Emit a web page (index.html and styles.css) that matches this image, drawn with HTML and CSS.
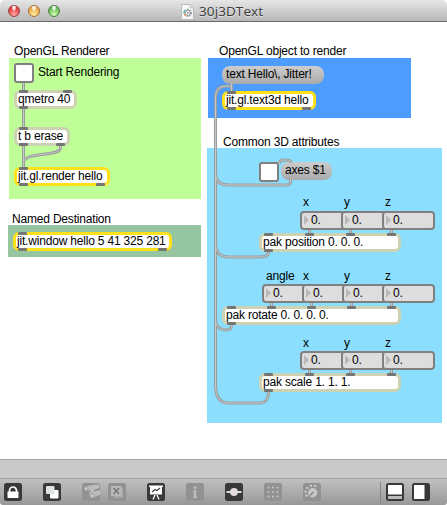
FILE: index.html
```html
<!DOCTYPE html>
<html lang="en">
<head>
<meta charset="utf-8">
<title>30j3DText</title>
<link rel="stylesheet" href="styles.css">
</head>
<body>
<div class="window">
  <header class="titlebar">
    <div class="lights"><i class="light red"></i><i class="light amber"></i><i class="light green"></i></div>
    <svg class="doc" width="13" height="16" viewBox="0 0 13 16">
      <path d="M.5.5h8.500l3.500 3.500v11.500H.5z" fill="#f6f6f6" stroke="#bbb"/>
      <path d="M9 .5v3.500h3.500" fill="#ddd" stroke="#bbb" stroke-width=".7"/>
      <circle cx="6.800" cy="8.800" r="3" fill="none" stroke="#858b8d" stroke-width="2" stroke-dasharray="1.500 .7"/>
      <path d="M3 9.500A3.700 3.700 0 0 1 4.500 6" fill="none" stroke="#5eb9c2" stroke-width="1.500"/>
      <path d="M3.300 9.500l1.300 2" stroke="#ee9560" stroke-width="1.500"/>
      <circle cx="6.800" cy="8.800" r="1" fill="#999"/>
    </svg>
    <h1 class="title">30j3DText</h1>
  </header>

  <main class="patch">
    <div class="panel p-render"></div>
    <div class="panel p-object"></div>
    <div class="panel p-attrs"></div>
    <div class="panel p-dest"></div>

    <span class="label l-render">OpenGL Renderer</span>
    <span class="label l-start">Start Rendering</span>
    <span class="label l-object">OpenGL object to render</span>
    <span class="label l-attrs">Common 3D attributes</span>
    <span class="label l-dest">Named Destination</span>
    <span class="label c1 r1">x</span><span class="label c2 r1">y</span><span class="label c3 r1">z</span>
    <span class="label c0 r2">angle</span><span class="label c1 r2">x</span><span class="label c2 r2">y</span><span class="label c3 r2">z</span>
    <span class="label c1 r3">x</span><span class="label c2 r3">y</span><span class="label c3 r3">z</span>

    <div class="toggle t-start"></div>
    <div class="toggle t-axes"></div>
    <div class="message m-text">text Hello\, Jitter!</div>
    <div class="message m-axes">axes $1</div>

    <div class="object o-qmetro">qmetro 40</div>
    <div class="object o-trigger">t b erase</div>
    <div class="object jit o-render">jit.gl.render hello</div>
    <div class="object jit o-window">jit.window hello 5 41 325 281</div>
    <div class="object jit o-text3d">jit.gl.text3d hello</div>
    <div class="object o-position">pak position 0. 0. 0.</div>
    <div class="object o-rotate">pak rotate 0. 0. 0. 0.</div>
    <div class="object o-scale">pak scale 1. 1. 1.</div>

    <div class="numbers n-position"><div class="number">0.</div><div class="number">0.</div><div class="number">0.</div></div>
    <div class="numbers n-rotate"><div class="number">0.</div><div class="number">0.</div><div class="number">0.</div><div class="number">0.</div></div>
    <div class="numbers n-scale"><div class="number">0.</div><div class="number">0.</div><div class="number">0.</div></div>

    <svg class="cords" width="447" height="437" viewBox="0 22 447 437">
      <defs>
        <g id="wires" fill="none">
          <path d="M23.500 83v7M23.500 109v19M23.500 146v22"/>
          <path d="M60.500 146v2c0 9-37 3-37 15v4"/>
          <path d="M231.500 83v8v-2c0-3-2-3-5-3c-7 0-11 4-11 12V385c0 12 4 18 13 18h30c7 0 10-3 10-11"/>
          <path d="M279 164c0-3 2-4 6-4c4 0 6 0 6 3"/>
          <path d="M290.500 179v3c0 2-2 3-5 3h-57c-8 0-13-3-13-12"/>
          <path d="M268.500 252v1c0 3-4 4-10 4h-30c-8 0-13-4-13-14"/>
          <path d="M231.500 325c0 4-2 5-5 5c-7 0-11-4-11-10"/>
          <path d="M309.500 230v4M350.500 230v4M391.500 230v4"/>
          <path d="M271.500 303v4M311.500 303v4M351.500 303v4M391.500 303v4"/>
          <path d="M309.500 370v4M350.500 370v4M391.500 370v4"/>
        </g>
        <rect id="p" width="9" height="3" rx="1"/>
      </defs>
      <use href="#wires" class="cord-edge"/>
      <use href="#wires" class="cord-core"/>
      <g class="ports">
        <use href="#p" x="19" y="90"/><use href="#p" x="63" y="90"/><use href="#p" x="19" y="106"/>
        <use href="#p" x="19" y="127"/><use href="#p" x="19" y="143"/><use href="#p" x="56" y="143"/>
        <use href="#p" x="19" y="167"/><use href="#p" x="19" y="183"/><use href="#p" x="96" y="183"/>
        <use href="#p" x="18" y="232"/><use href="#p" x="18" y="248"/><use href="#p" x="158" y="248"/>
        <use href="#p" x="227" y="91"/><use href="#p" x="227" y="107"/><use href="#p" x="302" y="107"/>
        <use href="#p" x="264" y="233"/><use href="#p" x="305" y="233"/><use href="#p" x="346" y="233"/><use href="#p" x="387" y="233"/><use href="#p" x="264" y="249"/>
        <use href="#p" x="227" y="306"/><use href="#p" x="267" y="306"/><use href="#p" x="307" y="306"/><use href="#p" x="347" y="306"/><use href="#p" x="387" y="306"/><use href="#p" x="227" y="322"/>
        <use href="#p" x="264" y="373"/><use href="#p" x="305" y="373"/><use href="#p" x="346" y="373"/><use href="#p" x="387" y="373"/><use href="#p" x="264" y="389"/>
      </g>
    </svg>
  </main>

  <div class="status"></div>
  <footer class="toolbar">
    <svg class="tool" viewBox="0 0 18 18"><rect width="18" height="18" rx="2.500" fill="#393939"/><path d="M5.500 9V7.500a3.500 3.500 0 0 1 7 0V9" fill="none" stroke="#fff" stroke-width="1.700"/><rect x="3.500" y="8.500" width="11" height="6.500" rx=".7" fill="#fff"/></svg>
    <svg class="tool wide" viewBox="0 0 18 18"><rect width="18" height="18" rx="2.500" fill="#393939"/><rect x="7" y="7" width="8.500" height="8.500" rx="1" fill="#fff"/><rect x="3" y="3" width="8.500" height="8" rx="1" fill="#dce4e4"/></svg>
    <svg class="tool wide" viewBox="0 0 18 18"><rect width="18" height="18" rx="2.500" fill="#929292"/><path d="M4 3.200L14.500 1.500a2 2 0 0 1 1.500 4L12.500 6.500 11 9l5-1.500a2 2 0 0 1 1.500 4.500L11 15l-4-4 2-4L4.500 8z" fill="#bdbdbd"/><ellipse cx="4" cy="5.600" rx="2" ry="2.300" fill="#c6c6c6" stroke="#929292" stroke-width=".8"/><ellipse cx="10" cy="12.700" rx="2.200" ry="2.500" fill="#c6c6c6" stroke="#929292" stroke-width=".8"/></svg>
    <svg class="tool near" viewBox="0 0 18 18"><rect width="18" height="18" rx="2.500" fill="#929292"/><rect x="5.500" y="5" width="9.500" height="10" rx="1" fill="#aaa"/><rect x="3" y="3" width="10.500" height="10" rx="1" fill="#b9b9b9"/><path d="M5.500 5l5.500 6M11 5l-5.500 6" stroke="#777" stroke-width="1.600"/></svg>
    <svg class="tool wide" viewBox="0 0 18 18"><rect width="18" height="18" rx="2.500" fill="#393939"/><path d="M2 2.500h14v1.500h-1v7.500H3V4H2z" fill="#fff"/><path d="M5 9l3-2.500 2 1L13 5" fill="none" stroke="#444" stroke-width="1.200"/><path d="M8 12l-2 4.500M10 12l2 4.500" stroke="#fff" stroke-width="1.300"/></svg>
    <svg class="tool wide" viewBox="0 0 18 18"><rect width="18" height="18" rx="2.500" fill="#929292"/><circle cx="9" cy="4.500" r="1.500" fill="#bcbcbc"/><path d="M7 7h3.200v6.500H11V15H7v-1.500h.7V8.500H7z" fill="#bcbcbc"/></svg>
    <svg class="tool wide" viewBox="0 0 18 18"><rect width="18" height="18" rx="2.500" fill="#393939"/><path d="M1.500 9h15" stroke="#ddd" stroke-width="1.800"/><circle cx="9" cy="9" r="3.900" fill="#e3dbdd"/></svg>
    <svg class="tool wide" viewBox="0 0 18 18"><rect width="18" height="18" rx="2.500" fill="#929292"/><path d="M4.500 4.500h11M4.500 9h11M4.500 13.500h11" stroke="#c4c4c4" stroke-width="2" stroke-linecap="round" stroke-dasharray="0 4.500"/></svg>
    <svg class="tool wide" viewBox="0 0 18 18"><rect width="18" height="18" rx="2.500" fill="#929292"/><circle cx="9.700" cy="9.700" r="4.700" fill="#c6c6c6"/><path d="M10.500 9L7 12.500" stroke="#858585" stroke-width="1.500"/><g fill="#c6c6c6"><circle cx="3.500" cy="12.500" r="1.300"/><circle cx="2.600" cy="8.800" r="1.300"/><circle cx="4.200" cy="5" r="1.300"/><circle cx="8" cy="2.800" r="1.300"/><circle cx="12.200" cy="3" r="1.300"/></g></svg>
    <span class="divider"></span>
    <svg class="tool pane" viewBox="0 0 18 18"><rect width="18" height="18" rx="2.500" fill="#393939"/><path d="M2 2h14v9.500H2z" fill="#fff"/><path d="M2 13h14v3H2z" fill="#bcbcbc"/></svg>
    <svg class="tool near" viewBox="0 0 18 18"><rect width="18" height="18" rx="2.500" fill="#393939"/><path d="M2 2h10.500v14H2z" fill="#fff"/></svg>
  </footer>
</div>
</body>
</html>
```
FILE: styles.css
```css
* { box-sizing: border-box; }
body { margin: 0; background: #fff; }

.window {
  width: 447px;
  height: 505px;
  display: flex;
  flex-direction: column;
  overflow: hidden;
  border-radius: 5px 5px 3px 3px;
  font: 12px/14px "Liberation Sans", Arial, sans-serif;
  letter-spacing: -.19px;
  color: #000;
}

/* Title bar */
.titlebar {
  height: 22px;
  flex: none;
  display: flex;
  align-items: center;
  padding: 0 0 0 8px;
  background: linear-gradient(#e6e6e6, #b8b8b8);
  border-bottom: 1px solid #686868;
}
.lights { display: flex; gap: 8px; width: 173px; }
.light {
  width: 12px;
  height: 12px;
  border-radius: 50%;
  border: 1px solid;
}
.red { border-color: #9c4545; background: radial-gradient(ellipse at 50% 12%, #fff 0 12%, transparent 35%), radial-gradient(circle at 50% 85%, #ffaaa5, #e0403f 65%); }
.amber { border-color: #a2703a; background: radial-gradient(ellipse at 50% 12%, #fff 0 12%, transparent 35%), radial-gradient(circle at 50% 85%, #fff0a0, #eda847 65%); }
.green { border-color: #4d7f45; background: radial-gradient(ellipse at 50% 12%, #fff 0 12%, transparent 35%), radial-gradient(circle at 50% 85%, #d4ffb4, #6ab956 65%); }
.doc { margin-top: 2px; }
.title {
  margin: 1px 0 0 5px;
  font: 13.5px/18px "Open Sans", "Noto Sans", sans-serif;
  letter-spacing: .1px;
  color: #3b3b3b;
  text-shadow: 0 1px 0 rgba(255, 255, 255, .5);
}

/* Patcher canvas: nodes are placed freely */
.patch { position: relative; height: 437px; flex: none; background: #fff; }
.panel, .label, .toggle, .message, .object, .numbers, .cords { position: absolute; white-space: nowrap; }
.cords { left: 0; top: 0; }
.cord-edge { stroke: #999d9d; stroke-width: 3; }
.cord-core { stroke: #c6c9c9; stroke-width: 1; }
.ports { fill: #757575; }

.p-render { left: 9px; top: 36px; width: 192px; height: 141px; background: #c0ff98; }
.p-object { left: 208px; top: 36px; width: 203px; height: 60px; background: #4c9dff; }
.p-attrs { left: 207px; top: 126px; width: 235px; height: 275px; background: #8cdeff; }
.p-dest { left: 8px; top: 203px; width: 193px; height: 32px; background: #96c5a2; }

.l-render { left: 14px; top: 22px; }
.l-start { left: 38px; top: 43px; }
.l-object { left: 219px; top: 22px; }
.l-attrs { left: 223px; top: 113px; }
.l-dest { left: 12px; top: 190px; }
.c0 { left: 266px; }
.c1 { left: 303px; }
.c2 { left: 344px; }
.c3 { left: 385px; }
.r1 { top: 173px; }
.r2 { top: 247px; }
.r3 { top: 314px; }

.toggle { width: 20px; height: 20px; background: #fff; border: 2px solid #808080; border-radius: 3px; }
.t-start { left: 14px; top: 41px; }
.t-axes { left: 259px; top: 140px; }

.message {
  height: 18px;
  padding: 1px 4px;
  border-radius: 8px;
  background: linear-gradient(#cdcdcd, #aaa);
}
.m-text { left: 222px; top: 44px; width: 102px; }
.m-axes { left: 281px; top: 140px; width: 51px; }

.object {
  height: 19px;
  padding: 0 1px;
  line-height: 12px;
  background: #fff;
  border: 3px solid #cdd3b2;
  border-radius: 6px;
}
.jit { border-color: #ffe01a; }
.o-qmetro { left: 14px; top: 68px; width: 63px; }
.o-trigger { left: 14px; top: 105px; width: 56px; }
.o-render { left: 14px; top: 145px; width: 96px; }
.o-window { left: 13px; top: 210px; width: 159px; }
.o-text3d { left: 222px; top: 69px; width: 94px; }
.o-position { left: 259px; top: 211px; width: 142px; }
.o-rotate { left: 222px; top: 284px; width: 179px; }
.o-scale { left: 259px; top: 351px; width: 142px; }

.numbers { display: flex; height: 19px; }
.n-position { left: 300px; top: 189px; }
.n-rotate { left: 262px; top: 262px; }
.n-scale { left: 300px; top: 329px; }
.number {
  display: flex;
  align-items: center;
  gap: 2px;
  width: 53px;
  margin-right: -12px;
  padding: 0 0 1px 2px;
  line-height: 13px;
  background: #ddd;
  border: 2px solid #808080;
  border-radius: 4px;
}
.n-rotate .number { margin-right: -13px; }
.numbers .number:last-child { margin-right: 0; }
.number::before {
  content: "";
  border: solid transparent;
  border-width: 5px 0 5px 5px;
  border-left-color: #b9b9b9;
}

/* Bottom bars */
.status { height: 19px; flex: none; background: #c9c9c9; border-top: 1px solid #a5a5a5; }
.toolbar {
  height: 27px;
  flex: none;
  display: flex;
  align-items: flex-start;
  padding: 4px 0 0 4px;
  border-top: 1px solid #a5a5a5;
  background: linear-gradient(#c0c0c0, #989898);
}
.tool { width: 18px; height: 18px; flex: none; }
.wide { margin-left: 21px; }
.near { margin-left: 8px; }
.divider { width: 1px; height: 21px; margin: -1px 0 0 59px; background: #858585; }
.pane { margin-left: 5px; }
```
